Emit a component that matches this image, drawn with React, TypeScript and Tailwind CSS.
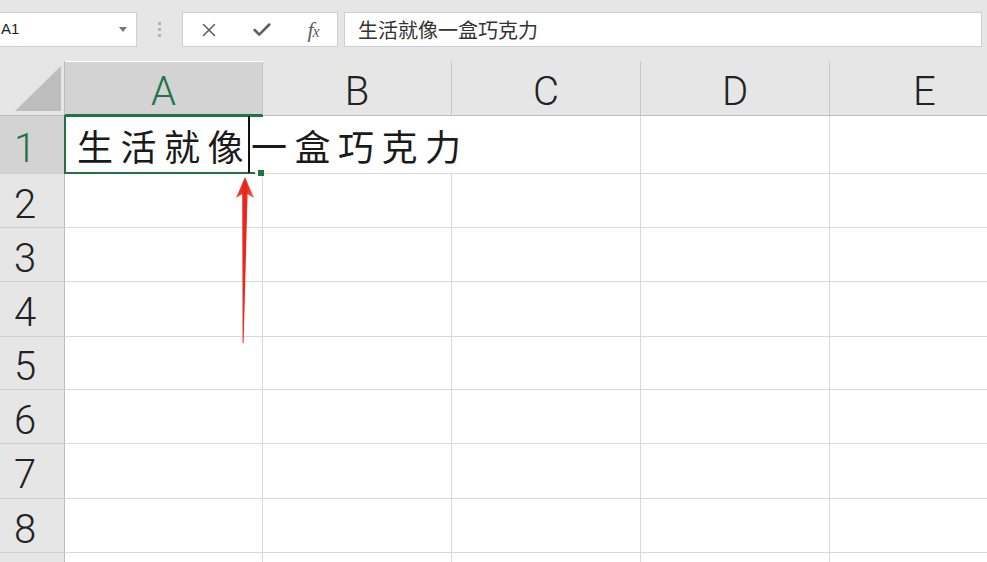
import { X, Check } from 'lucide-react';

const HEADER_FONT = "font-['Roboto','Liberation_Sans',sans-serif] font-light";
const CJK_FONT = "font-['Noto_Sans_CJK_SC','Noto_Sans',sans-serif]";

const COLS = [
  { key: 'A', w: 'w-[198px]', active: true },
  { key: 'B', w: 'w-[189px]', active: false },
  { key: 'C', w: 'w-[189px]', active: false },
  { key: 'D', w: 'w-[189px]', active: false },
  { key: 'E', w: 'w-[190px]', active: false },
];

// row 9 is only a sliver at the bottom edge, its number is not visible
const ROWS = [
  { n: 1, h: 'h-[58px]', label: '1' },
  { n: 2, h: 'h-[54px]', label: '2' },
  { n: 3, h: 'h-[54px]', label: '3' },
  { n: 4, h: 'h-[55px]', label: '4' },
  { n: 5, h: 'h-[53px]', label: '5' },
  { n: 6, h: 'h-[54px]', label: '6' },
  { n: 7, h: 'h-[55px]', label: '7' },
  { n: 8, h: 'h-[54px]', label: '8' },
  { n: 9, h: 'h-[54px]', label: '' },
];

const TEXT = '生活就像一盒巧克力';

function FormulaToolbar() {
  return (
    <div className="h-[61px] shrink-0 bg-[#e6e6e6] flex items-start pt-[12px]">
      {/* Name box */}
      <div className="w-[137px] h-[35px] bg-white border-y border-r border-[#cfcfcf] flex items-center justify-between pl-[1px] pr-[9px]">
        <span className="text-[15px] text-[#222] font-['Liberation_Sans',sans-serif]">A1</span>
        <span className="w-0 h-0 border-l-[4px] border-r-[4px] border-t-[5px] border-l-transparent border-r-transparent border-t-[#777]" />
      </div>
      {/* Dots */}
      <div className="w-[45px] h-[35px] flex flex-col items-center justify-center gap-[3px]">
        <span className="w-[3px] h-[3px] bg-[#b3b3b3]" />
        <span className="w-[3px] h-[3px] bg-[#b3b3b3]" />
        <span className="w-[3px] h-[3px] bg-[#b3b3b3]" />
      </div>
      {/* Cancel / enter / fx */}
      <div className="w-[156px] h-[35px] bg-white border border-[#cfcfcf] flex items-center">
        <div className="w-[52px] flex justify-center">
          <X className="w-[22px] h-[22px] text-[#5f5f5f]" strokeWidth={1.7} />
        </div>
        <div className="w-[54px] flex justify-center">
          <Check className="w-[22px] h-[22px] text-[#5f5f5f]" strokeWidth={2.8} />
        </div>
        <div className="w-[48px] flex justify-center">
          <span className="text-[22px] italic text-[#5f5f5f] font-['Liberation_Serif',serif] tracking-[-1px]">
            f<span className="text-[16px]">x</span>
          </span>
        </div>
      </div>
      {/* Formula input */}
      <div className={`ml-[6px] mr-[5px] flex-1 h-[35px] bg-white border border-[#cfcfcf] flex items-center pl-[13px] text-[20px] text-[#333] ${CJK_FONT}`}>
        {TEXT}
      </div>
    </div>
  );
}

function ColumnHeaders() {
  return (
    <div className="h-[55px] flex shrink-0">
      {/* Corner */}
      <div className="w-[65px] shrink-0 bg-[#e6e6e6] border-r border-b border-[#bdbdbd] flex items-end justify-end pr-[3px] pb-[4px]">
        <svg width="46" height="45" viewBox="0 0 46 45">
          <polygon points="0,45 46,45 46,0" fill="#bdbdbd" />
        </svg>
      </div>
      {COLS.map(col => (
        <div
          key={col.key}
          className={`${col.w} shrink-0 flex items-center justify-center pt-[8px] text-[40px] ${HEADER_FONT} ${
            col.active
              ? 'bg-[#d3d3d3] text-[#217346] border-r border-[#c4c4c4] border-b-2 border-b-[#217346] mt-[1px]'
              : 'bg-[#e6e6e6] text-[#222] border-r border-b border-r-[#c8c8c8] border-b-[#bdbdbd]'
          }`}
        >
          {col.key}
        </div>
      ))}
    </div>
  );
}

function Grid() {
  return (
    <div className="flex flex-col">
      {ROWS.map(row => (
        <div key={row.n} className={`${row.h} flex shrink-0`}>
          <div
            className={`w-[65px] shrink-0 border-r border-b border-r-[#bdbdbd] border-b-[#cfcfcf] flex items-center justify-center pr-[14px] pt-[8px] text-[40px] ${HEADER_FONT} ${
              row.n === 1 ? 'bg-[#d3d3d3] text-[#217346]' : 'bg-[#e6e6e6] text-[#222]'
            }`}
          >
            {row.label}
          </div>
          {COLS.map(col => {
            // text in A1 spills over B1 and C1, so those gridlines are hidden
            const overflowed = row.n === 1 && (col.key === 'A' || col.key === 'B');
            return (
              <div
                key={col.key}
                className={`${col.w} shrink-0 bg-white border-b border-[#d9d9d9] ${overflowed ? '' : 'border-r'} ${
                  row.n === 1 && col.key === 'A' ? 'relative z-10 overflow-visible' : ''
                }`}
              >
                {row.n === 1 && col.key === 'A' && (
                  <div className={`absolute left-[12px] top-[5px] whitespace-nowrap text-[36px] leading-[48px] tracking-[7.5px] text-[#1a1a1a] ${CJK_FONT}`}>
                    {TEXT}
                  </div>
                )}
              </div>
            );
          })}
        </div>
      ))}
    </div>
  );
}

export default function App() {
  return (
    <div className="w-[987px] h-[562px] overflow-hidden bg-white flex flex-col">
      <FormulaToolbar />
      <div className="relative flex-1 overflow-hidden">
        <ColumnHeaders />
        <Grid />

        {/* Active cell selection A1 */}
        <div className="absolute left-[64px] top-[54px] w-[199px] h-[2px] bg-[#217346] z-20" />
        <div className="absolute left-[64px] top-[54px] w-[2px] h-[59px] bg-[#217346] z-20" />
        <div className="absolute left-[64px] top-[111px] w-[191px] h-[2px] bg-[#217346] z-20" />
        <div className="absolute left-[258px] top-[109px] w-[6px] h-[6px] bg-[#217346] ring-1 ring-white z-20" />

        {/* Text cursor */}
        <div className="absolute left-[248px] top-[55px] w-[1.5px] h-[57px] bg-[#111] z-20" />

        {/* Red arrow */}
        <svg className="absolute left-[230px] top-[114px] z-30" width="30" height="170" viewBox="0 0 30 170">
          <defs>
            <linearGradient id="arrowFill" x1="0" y1="0" x2="1" y2="0">
              <stop offset="0" stopColor="#f04a3c" />
              <stop offset="0.5" stopColor="#e8231c" />
              <stop offset="1" stopColor="#f05a4a" />
            </linearGradient>
          </defs>
          <polygon
            points="15,2 24,23 17.6,19 13.6,168 12.6,168 12.2,19 6,23"
            fill="url(#arrowFill)"
          />
        </svg>
      </div>
    </div>
  );
}
